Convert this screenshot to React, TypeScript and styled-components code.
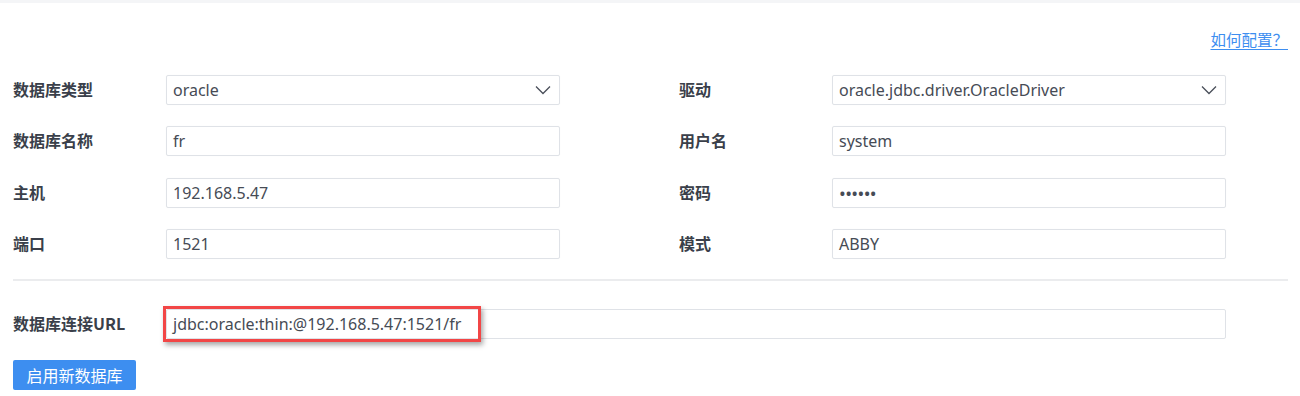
import React from "react";
import styled, { createGlobalStyle } from "styled-components";

const GlobalStyle = createGlobalStyle`
  html, body {
    margin: 0;
    padding: 0;
    background: #ffffff;
  }
  body {
    font-family: "Noto Sans", "Noto Sans CJK SC", sans-serif;
  }
`;

interface Field {
  label: string;
  value: string;
  select?: boolean;
  password?: boolean;
}

const fields: Field[] = [
  { label: "数据库类型", value: "oracle", select: true },
  { label: "驱动", value: "oracle.jdbc.driver.OracleDriver", select: true },
  { label: "数据库名称", value: "fr" },
  { label: "用户名", value: "system" },
  { label: "主机", value: "192.168.5.47" },
  { label: "密码", value: "••••••", password: true },
  { label: "端口", value: "1521" },
  { label: "模式", value: "ABBY" },
];

const Chevron = () => (
  <svg width="16" height="10" viewBox="0 0 16 10">
    <polyline
      points="1,1.5 8,8.5 15,1.5"
      fill="none"
      stroke="#4a4f5a"
      strokeWidth="1.3"
    />
  </svg>
);

export default function App() {
  return (
    <>
      <GlobalStyle />
      <TopStrip />
      <Page>
        <LinkRow>
          <HelpLink href="#">如何配置？</HelpLink>
        </LinkRow>
        <FormGrid>
          {fields.map((f) => (
            <FieldRow key={f.label}>
              <Label>{f.label}</Label>
              <InputBox $password={f.password}>
                <span>{f.value}</span>
                {f.select && <Chevron />}
              </InputBox>
            </FieldRow>
          ))}
        </FormGrid>
        <Divider />
        <UrlRow>
          <Label>数据库连接URL</Label>
          <UrlWrap>
            <UrlInput>jdbc:oracle:thin:@192.168.5.47:1521/fr</UrlInput>
            <Highlight />
          </UrlWrap>
        </UrlRow>
        <PrimaryButton>启用新数据库</PrimaryButton>
      </Page>
    </>
  );
}

const TopStrip = styled.div`
  height: 3px;
  background: #f4f5f7;
`;

const Page = styled.div`
  padding: 0 12px 0 13px;
`;

const LinkRow = styled.div`
  display: flex;
  justify-content: flex-end;
  height: 72px;
  padding-top: 26px;
  box-sizing: border-box;
`;

const HelpLink = styled.a`
  font-family: "Noto Sans CJK SC", sans-serif;
  font-size: 15.5px;
  line-height: 20px;
  color: #3d8ef0;
  text-decoration: underline;
  text-underline-offset: 3px;
  height: 20px;
`;

const FormGrid = styled.div`
  display: grid;
  grid-template-columns: 547px 547px;
  column-gap: 119px;
  row-gap: 21.3px;
`;

const FieldRow = styled.div`
  display: grid;
  grid-template-columns: 153px 394px;
  align-items: center;
`;

const Label = styled.div`
  font-family: "Noto Sans CJK SC", sans-serif;
  font-weight: 700;
  font-size: 16px;
  line-height: 20px;
  margin-top: -2px;
  color: #3a3f4a;
`;

const InputBox = styled.div<{ $password?: boolean }>`
  height: 30px;
  box-sizing: border-box;
  border: 1px solid #dfe2e7;
  border-radius: 2px;
  box-shadow: 0 0 1px rgba(0, 0, 0, 0.06);
  display: flex;
  align-items: center;
  justify-content: space-between;
  padding: 0 8px 0 6px;
  font-family: "Noto Sans", "Noto Sans CJK SC", sans-serif;
  font-size: ${(p) => (p.$password ? "18px" : "16px")};
  letter-spacing: ${(p) => (p.$password ? "-0.6px" : "0")};
  color: #464b55;
`;

const Divider = styled.div`
  height: 2px;
  background: #ebecee;
  margin: 20px 0 28px;
`;

const UrlRow = styled.div`
  display: grid;
  grid-template-columns: 153px 1060px;
  align-items: center;
`;

const UrlWrap = styled.div`
  position: relative;
`;

const UrlInput = styled.div`
  height: 30px;
  box-sizing: border-box;
  border: 1px solid #dfe2e7;
  border-radius: 2px;
  display: flex;
  align-items: center;
  padding: 0 6px;
  font-size: 16px;
  color: #464b55;
`;

const Highlight = styled.div`
  position: absolute;
  left: -3px;
  top: -3px;
  width: 318px;
  height: 36px;
  box-sizing: border-box;
  border: 3px solid #f24646;
  box-shadow: 2px 3px 5px rgba(0, 0, 0, 0.35);
  pointer-events: none;
`;

const PrimaryButton = styled.button`
  margin-top: 21px;
  height: 30px;
  width: 123px;
  padding: 0;
  border: none;
  border-radius: 2px;
  background: #3d8ef0;
  color: #ffffff;
  font-family: "Noto Sans CJK SC", sans-serif;
  font-size: 16px;
  cursor: pointer;
`;
